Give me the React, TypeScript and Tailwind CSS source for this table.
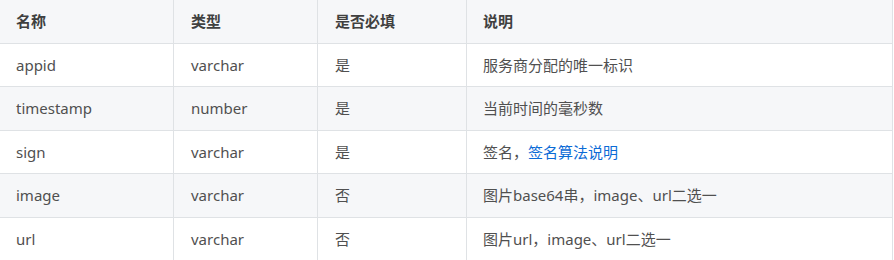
const rows = [
  { name: "appid", type: "varchar", required: "是", desc: <>服务商分配的唯一标识</> },
  { name: "timestamp", type: "number", required: "是", desc: <>当前时间的毫秒数</> },
  {
    name: "sign",
    type: "varchar",
    required: "是",
    desc: (
      <>
        签名，<a href="#" className="text-[#0b6bd6] no-underline">签名算法说明</a>
      </>
    ),
  },
  { name: "image", type: "varchar", required: "否", desc: <>图片base64串，image、url二选一</> },
  { name: "url", type: "varchar", required: "否", desc: <>图片url，image、url二选一</> },
];

const cols = "grid grid-cols-[174px_144px_149px_426px] w-[893px]";
const cell = "flex items-center border-r border-[#dfe2e5]";

export default function App() {
  return (
    <div className="w-[894px] h-[260px] overflow-hidden bg-white font-['Noto_Sans','Noto_Sans_CJK_SC',sans-serif] text-[15px] text-[#505050]">
      <div className={`${cols} h-[43.5px] border-b border-[#dfe2e5] bg-[#f6f7f9] font-bold text-[#404040]`}>
        <div className={`${cell} pl-4`}>名称</div>
        <div className={`${cell} pl-[17px]`}>类型</div>
        <div className={`${cell} pl-[17px]`}>是否必填</div>
        <div className={`${cell} pl-4`}>说明</div>
      </div>
      {rows.map((r, i) => (
        <div
          key={r.name}
          className={`${cols} h-[43.5px] border-b border-[#dfe2e5] ${i % 2 === 1 ? "bg-[#f6f7f9]" : "bg-white"}`}
        >
          <div className={`${cell} pl-4`}>{r.name}</div>
          <div className={`${cell} pl-[17px]`}>{r.type}</div>
          <div className={`${cell} pl-[17px]`}>{r.required}</div>
          <div className={`${cell} pl-4`}>{r.desc}</div>
        </div>
      ))}
    </div>
  );
}
